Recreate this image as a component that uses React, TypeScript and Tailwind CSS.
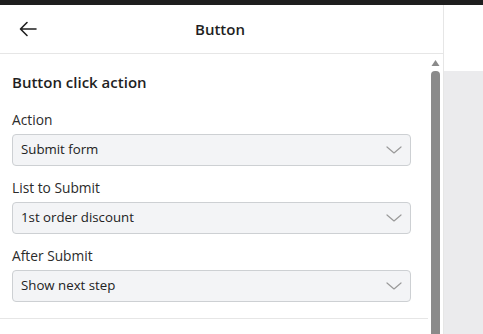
import React from "react";

function Chevron() {
  return (
    <svg width="16" height="8" viewBox="0 0 16 8" fill="none" className="shrink-0">
      <path d="M1 1 L8 7 L15 1" stroke="#9a9a9a" strokeWidth="1.2" strokeLinecap="round" strokeLinejoin="round" />
    </svg>
  );
}

function Field({ label, value }: { label: string; value: string }) {
  return (
    <div className="flex flex-col gap-1">
      <div className="h-5 leading-5 text-[13.75px] text-[#2b2b2b]">{label}</div>
      <div className="h-8 rounded-[4px] border border-[#cdd0d3] bg-[#f3f4f6] flex items-center justify-between pl-[8px] pr-[8px]">
        <span className="text-[13.25px] text-[#222]">{value}</span>
        <Chevron />
      </div>
    </div>
  );
}

export default function App() {
  return (
    <div
      className="w-[483px] h-[334px] flex flex-col bg-white overflow-hidden"
      style={{ fontFamily: '"Open Sans", "Noto Sans", sans-serif' }}
    >
      <div className="h-[5px] bg-[#1e1e1e] shrink-0" />
      <div className="flex-1 flex min-h-0">
        <div className="w-[444px] border-r border-[#e6e6e6] flex flex-col shrink-0">
          <div className="h-[49px] shrink-0 border-b border-[#e6e6e6] relative flex items-center justify-center">
            <svg
              width="18"
              height="16"
              viewBox="0 0 18 16"
              fill="none"
              className="absolute left-[19px] top-[16px]"
            >
              <path d="M17 8 H2 M8 1.5 L1.5 8 L8 14.5" stroke="#1f1f1f" strokeWidth="1.6" strokeLinecap="round" strokeLinejoin="round" />
            </svg>
            <span className="text-[15px] font-semibold text-[#1f1f1f] pr-[3px]">Button</span>
          </div>
          <div className="flex-1 flex min-h-0">
            <div className="w-[428px] shrink-0 flex flex-col">
              <div className="pl-3 pr-[17px] pt-[18px]">
                <div className="h-5 leading-5 text-[15px] font-semibold text-[#1f1f1f]">Button click action</div>
                <div className="mt-[18px] flex flex-col gap-3">
                  <Field label="Action" value="Submit form" />
                  <Field label="List to Submit" value="1st order discount" />
                  <Field label="After Submit" value="Show next step" />
                </div>
              </div>
              <div className="mt-4 border-t border-[#e6e6e6]" />
            </div>
            <div className="flex-1 flex flex-col items-start pl-[3px]">
              <svg width="9" height="8" viewBox="0 0 9 8" className="mt-[5px]">
                <path d="M4.5 1 L8.5 7 L0.5 7 Z" fill="#8a8a8a" />
              </svg>
              <div className="mt-[4px] w-[9px] flex-1 bg-[#8a8a8a] rounded-t-[4px]" />
            </div>
          </div>
        </div>
        <div className="flex-1 flex flex-col">
          <div className="h-[66px] bg-white" />
          <div className="flex-1 bg-[#ebebed]" />
        </div>
      </div>
    </div>
  );
}
